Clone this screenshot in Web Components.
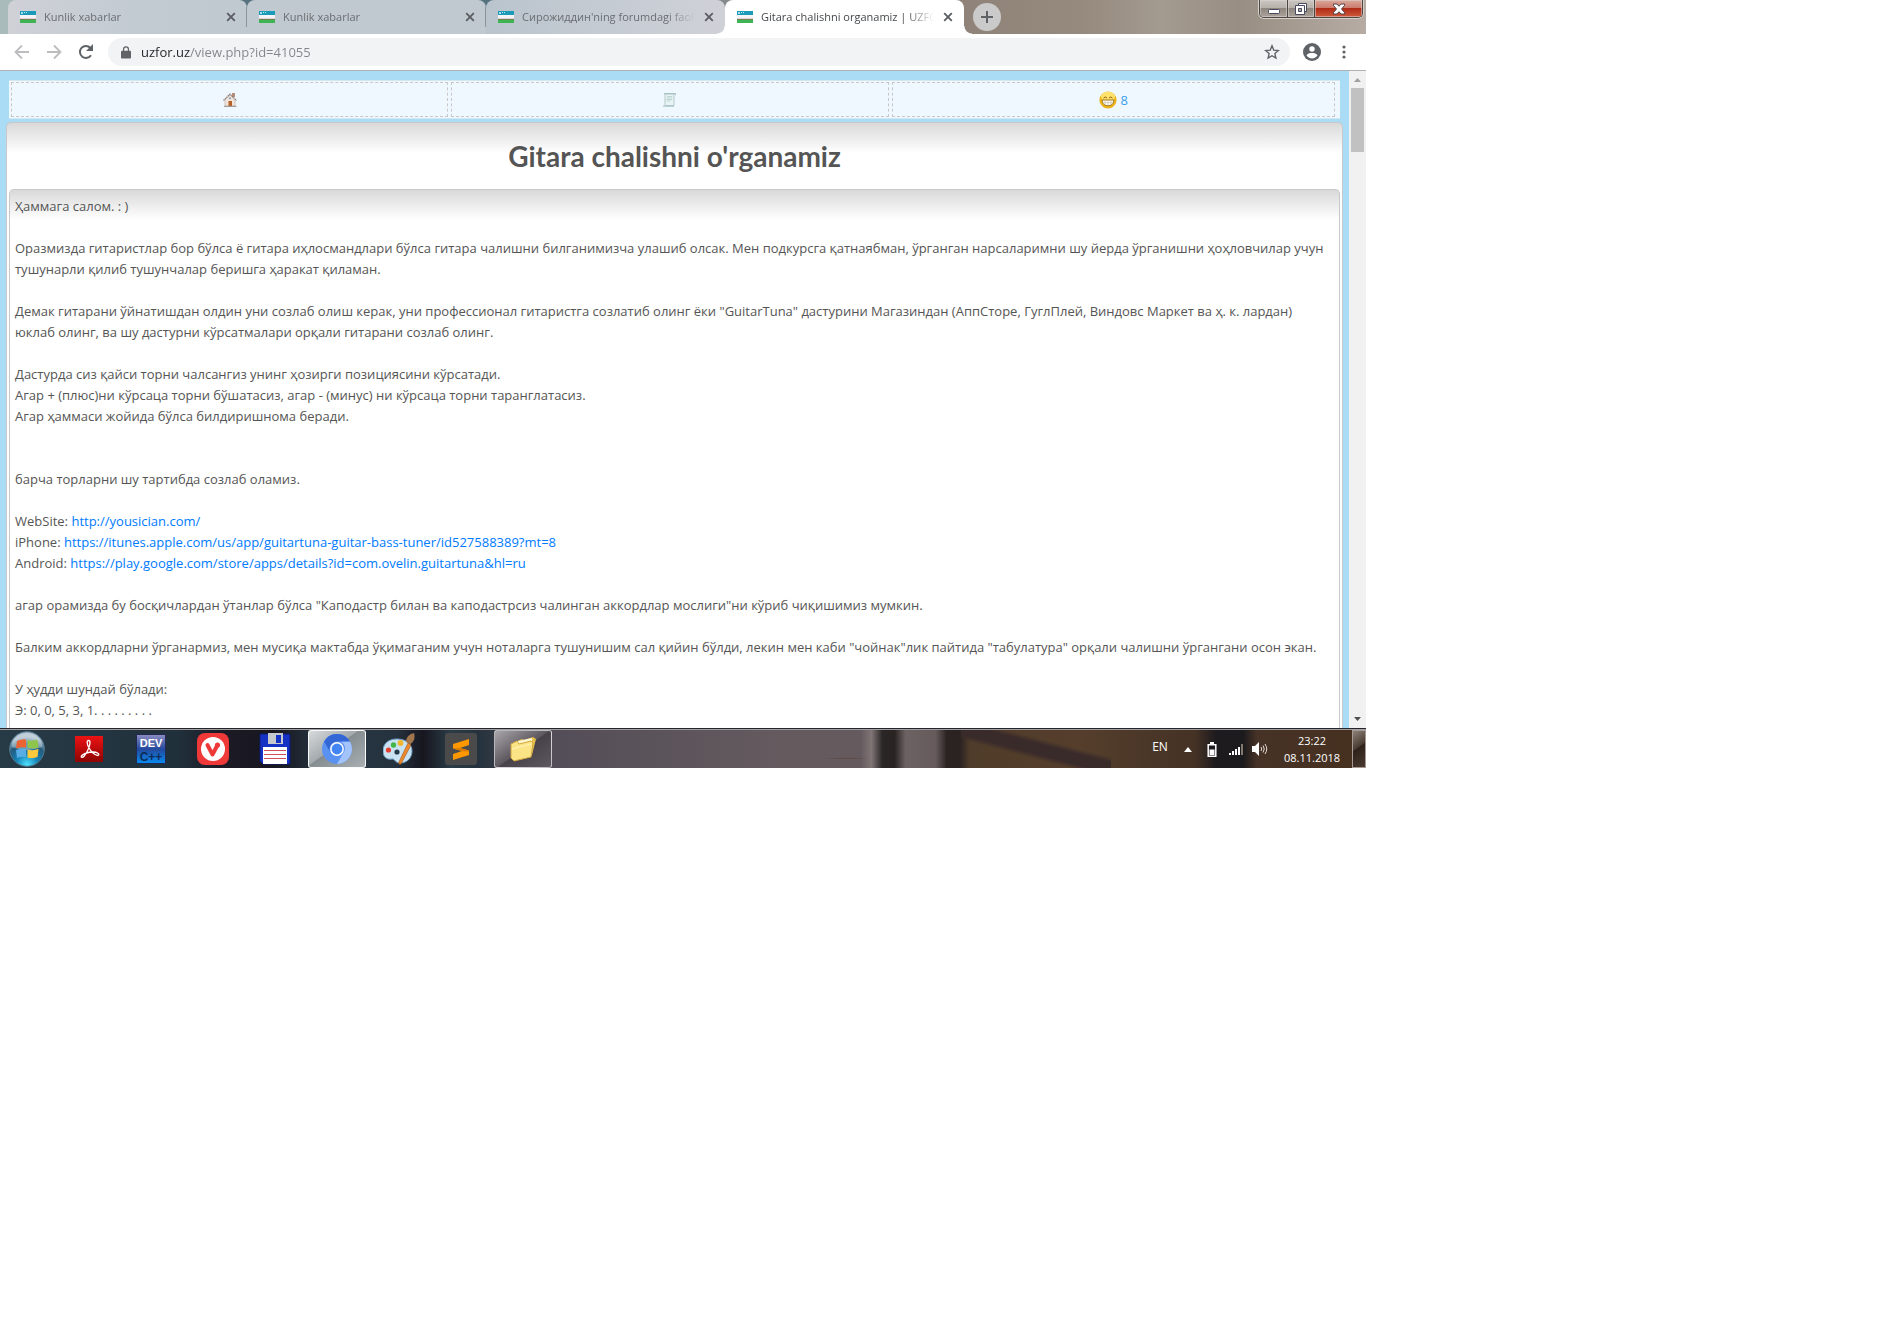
<!DOCTYPE html>
<html lang="uz">
<head>
<meta charset="utf-8">
<title>Gitara chalishni organamiz | UZFOR</title>
<style>
  body { margin: 0; background: #fff; font-family: "Open Sans", "Noto Sans", sans-serif; }
</style>
</head>
<body>
<desktop-screen>
  <tab-strip slot="window">
    <browser-tab>Kunlik xabarlar</browser-tab>
    <browser-tab>Kunlik xabarlar</browser-tab>
    <browser-tab>Сирожиддин'ning forumdagi faoliyati</browser-tab>
    <browser-tab active>Gitara chalishni organamiz | UZFOR</browser-tab>
  </tab-strip>
  <browser-toolbar slot="window"></browser-toolbar>
  <page-view slot="window">
    <forum-nav></forum-nav>
    <forum-topic>
      <span slot="title">Gitara chalishni o'rganamiz</span>
      Ҳаммага салом. : )<br><br>
      Оразмизда гитаристлар бор бўлса ё гитара иҳлосмандлари бўлса гитара чалишни билганимизча улашиб олсак. Мен подкурсга қатнаябман, ўрганган нарсаларимни шу йерда ўрганишни ҳоҳловчилар учун<br>
      тушунарли қилиб тушунчалар беришга ҳаракат қиламан.<br><br>
      Демак гитарани ўйнатишдан олдин уни созлаб олиш керак, уни профессионал гитаристга созлатиб олинг ёки "GuitarTuna" дастурини Магазиндан (АппСторе, ГуглПлей, Виндовс Маркет ва ҳ. к. лардан)<br>
      юклаб олинг, ва шу дастурни кўрсатмалари орқали гитарани созлаб олинг.<br><br>
      Дастурда сиз қайси торни чалсангиз унинг ҳозирги позициясини кўрсатади.<br>
      Агар + (плюс)ни кўрсаца торни бўшатасиз, агар - (минус) ни кўрсаца торни таранглатасиз.<br>
      Агар ҳаммаси жойида бўлса билдиришнома беради.<br><br><br>
      барча торларни шу тартибда созлаб оламиз.<br><br>
      WebSite: <topic-link>http://yousician.com/</topic-link><br>
      iPhone: <topic-link>https://itunes.apple.com/us/app/guitartuna-guitar-bass-tuner/id527588389?mt=8</topic-link><br>
      Android: <topic-link>https://play.google.com/store/apps/details?id=com.ovelin.guitartuna&amp;hl=ru</topic-link><br><br>
      агар орамизда бу босқичлардан ўтанлар бўлса "Каподастр билан ва каподастрсиз чалинган аккордлар мослиги"ни кўриб чиқишимиз мумкин.<br><br>
      Балким аккордларни ўрганармиз, мен мусиқа мактабда ўқимаганим учун ноталарга тушунишим сал қийин бўлди, лекин мен каби "чойнак"лик пайтида "табулатура" орқали чалишни ўргангани осон экан.<br><br>
      У ҳудди шундай бўлади:<br>
      Э: 0, 0, 5, 3, 1. . . . . . . . .
    </forum-topic>
  </page-view>
  <task-bar slot="taskbar"></task-bar>
</desktop-screen>

<script>
const define = (name, html, setup) => {
  const template = document.createElement('template');
  template.innerHTML = html;
  customElements.define(name, class extends HTMLElement {
    constructor() {
      super();
      this.attachShadow({ mode: 'open' }).append(template.content.cloneNode(true));
    }
    connectedCallback() { if (setup) setup(this, this.shadowRoot); }
  });
};
const reset = `:host,*{box-sizing:border-box} button{font:inherit;color:inherit;border:0;padding:0;margin:0;background:none;display:flex;align-items:center;justify-content:center} svg{display:block;flex:none}`;

define('desktop-screen', `<style>
  :host{display:block;max-width:1366px}
</style><slot name="window"></slot><slot name="taskbar"></slot>`);

define('tab-strip', `<style>${reset}
  :host{display:flex;height:34px;padding-left:8px;align-items:flex-start;
    background:linear-gradient(90deg,#a9bcbb 0,#a9bcbb 8px,#56727f 240px,#56727f 490px,#85898b 720px,#8f8379 960px,#96897d 1080px,#a39a90 1160px,#998e83 1240px,#b6aca4 100%)}
  .tabs{display:flex;flex:0 1 956px;min-width:0}
  .new{width:28px;height:28px;margin:3px 0 0 9px;border-radius:50%;background:#cbcacb;flex:none}
  .controls{display:flex;margin-left:auto;margin-right:3px;height:18px;border:1px solid #4c4644;border-top:0;border-radius:0 0 5px 5px;overflow:hidden;box-shadow:0 0 0 1px #d6d0cb;flex:none}
  .controls button{height:17px;width:27px;border-right:1px solid #4c4644;background:linear-gradient(#cbc6c2,#b8b1ab 45%,#8e867f 50%,#aba39b);box-shadow:inset 0 0 0 1px #ddd8d488}
  .controls button:first-child{width:28px}
  .controls button:last-child{width:47px;border:0;background:linear-gradient(#d9a99c,#cc7c6c 45%,#b02b16 50%,#cf5a3c)}
</style>
<div class="tabs"><slot></slot></div>
<button class="new" aria-label="New tab"><svg width="12" height="12" viewBox="0 0 12 12"><path d="M6 0v12M0 6h12" stroke="#5f6368" stroke-width="2"/></svg></button>
<div class="controls">
  <button aria-label="Minimize"><svg width="14" height="12" viewBox="0 0 14 12"><rect x="1.500" y="6.500" width="11" height="4" rx="1" fill="#fff" stroke="#474a5c"/></svg></button>
  <button aria-label="Restore"><svg width="14" height="14" viewBox="0 0 14 14"><path d="M4.500 1.500h8v8h-8z" fill="#fff" stroke="#474a5c"/><path d="M1.500 3.500h9v9h-9z" fill="#fff" stroke="#474a5c"/><path d="M4.500 6.500h3v3h-3z" fill="#aaa" stroke="#474a5c"/></svg></button>
  <button aria-label="Close"><svg width="14" height="12" viewBox="0 0 14 12"><path d="M1.500 1h3.500l2 2.300L9 1h3.500v1.500L9.500 6l3 3.500V11H9L7 8.700 5 11H1.500V9.500L4.500 6l-3-3.500z" fill="#fff" stroke="#50434c"/></svg></button>
</div>`);

define('browser-tab', `<style>${reset}
  :host{position:relative;display:flex;align-items:center;gap:8px;flex:1 1 0;min-width:0;height:34px;padding:0 10px 0 12px;border-radius:8px 8px 0 0;
    background:linear-gradient(90deg,#cfd1d7,#c3cbd2 50%,#c0c8d0);color:#6b6d71}
  :host(:nth-child(2)){background:#c0c9d0}
  :host(:nth-child(3)){background:linear-gradient(90deg,#b9c4cd,#c5cbd3 50%,#cfd1d7)}
  :host([active]){background:#fff;color:#45484c}
  :host(:nth-child(-n+2))::after{content:"";position:absolute;right:0;top:7px;width:1px;height:20px;background:#8b9499}
  :host([active])::before,:host([active])::after{content:"";position:absolute;bottom:0;width:8px;height:8px}
  :host([active])::before{left:-8px;background:radial-gradient(circle at 0 0,#0000 7px,#fff 8px)}
  :host([active])::after{right:-8px;background:radial-gradient(circle at 100% 0,#0000 7px,#fff 8px)}
  .title{flex:1;min-width:0;overflow:hidden;white-space:nowrap;font-size:11px;line-height:20px;text-align:left;display:block;
    -webkit-mask:linear-gradient(90deg,#000 calc(100% - 28px),#0000);mask:linear-gradient(90deg,#000 calc(100% - 28px),#0000)}
  .close{width:12px;height:12px;flex:none;color:#5a5d61}
</style>
<svg width="16" height="12" viewBox="0 0 16 12"><path fill="#1b9ab9" d="M0 0h16v4H0z"/><path fill="#f4f4f6" d="M0 4h16v4H0z"/><path fill="#3eb552" d="M0 8h16v4H0z"/><path stroke="#a0505a" stroke-width=".7" d="M0 8.200h16"/><circle cx="2" cy="2" r="1.100" fill="#c5eef6"/><path stroke="#c5eef6" d="M4 1.500h4" stroke-dasharray="1 1"/></svg>
<button class="title" role="tab"><slot></slot></button>
<button class="close" aria-label="Close tab"><svg width="10" height="10" viewBox="0 0 10 10"><path d="M1.200 1.200l7.600 7.600M8.800 1.200L1.200 8.800" stroke="currentColor" stroke-width="1.800"/></svg></button>`);

define('browser-toolbar', `<style>${reset}
  :host{display:flex;align-items:center;height:37px;padding:0 14px 0 12px;background:#fff;border-bottom:1px solid #b3b0b3;color:#5f6368}
  .nav{display:flex;gap:12px;margin-right:12px}
  .nav button{width:20px;height:28px}
  .off{color:#bdbdbf}
  .box{display:flex;flex:1;align-items:center;height:28px;border-radius:14px;background:#f1f3f4;padding:0 10px 0 13px;gap:10px}
  input{flex:1;min-width:0;border:0;outline:0;padding:0;height:24px;font:13px/24px "Open Sans",sans-serif;color:#202124;
    -webkit-text-fill-color:transparent;background:linear-gradient(90deg,#202124 49px,#80868b 49px);-webkit-background-clip:text;background-clip:text}
  .end{display:flex;gap:14px;margin-left:12px}
  .end button{width:16px}
  .end button:first-child{width:20px}
</style>
<div class="nav">
  <button class="off" aria-label="Back"><svg width="16" height="16" viewBox="0 0 16 16"><path d="M15 8H2M8 1.500L1.500 8 8 14.500" fill="none" stroke="currentColor" stroke-width="1.800"/></svg></button>
  <button class="off" aria-label="Forward"><svg width="16" height="16" viewBox="0 0 16 16"><path d="M1 8h13M8 1.500L14.500 8 8 14.500" fill="none" stroke="currentColor" stroke-width="1.800"/></svg></button>
  <button aria-label="Reload"><svg width="16" height="16" viewBox="0 0 16 16"><path d="M13 11.200A6 6 0 1 1 12.300 3.800" fill="none" stroke="currentColor" stroke-width="2"/><path d="M15 0v7H8z" fill="currentColor"/></svg></button>
</div>
<div class="box">
  <svg width="10" height="13" viewBox="0 0 11 14"><path d="M1 5h9a1 1 0 0 1 1 1v6.500a1 1 0 0 1-1 1H1a1 1 0 0 1-1-1V6a1 1 0 0 1 1-1z" fill="currentColor"/><path d="M2.800 6V3.500a2.700 2.700 0 0 1 5.400 0V6" fill="none" stroke="currentColor" stroke-width="1.400"/></svg>
  <input aria-label="Address" value="uzfor.uz/view.php?id=41055">
  <button aria-label="Bookmark"><svg width="16" height="16" viewBox="0 0 16 16"><path d="M8 1.800l1.700 4.300 4.700.4-3.500 3.100 1 4.500L8 11.700l-3.900 2.400 1-4.500L1.600 6.500l4.700-.4z" fill="none" stroke="currentColor" stroke-width="1.400"/></svg></button>
</div>
<div class="end">
  <button aria-label="Profile"><svg width="18" height="18" viewBox="0 0 18 18"><circle cx="9" cy="9" r="9" fill="currentColor"/><circle cx="9" cy="6" r="2.700" fill="#fff"/><path d="M3.500 12.600c1-2 3-2.600 5.500-2.600s4.500.6 5.500 2.600C13 14.600 11 15.500 9 15.500s-4-.9-5.500-2.900z" fill="#fff"/></svg></button>
  <button aria-label="Menu"><svg width="4" height="14" viewBox="0 0 4 14" fill="currentColor"><circle cx="2" cy="2" r="1.600"/><circle cx="2" cy="7" r="1.600"/><circle cx="2" cy="12" r="1.600"/></svg></button>
</div>`);

define('page-view', `<style>${reset}
  :host{display:flex;background:#aadcf6}
  main{flex:1;min-width:0;padding:9px 6px 0 6px}
  .scroll{width:17px;background:#f1f1f1;display:flex;flex-direction:column;align-items:center;padding:7px 0}
  .thumb{width:13px;height:64px;background:#c1c1c1;margin-top:6px}
  .down{margin-top:auto}
</style><main><slot></slot></main>
<div class="scroll"><svg width="7" height="4" viewBox="0 0 7 4"><path d="M0 4l3.500-4L7 4z" fill="#a0a0a0"/></svg><div class="thumb"></div><svg class="down" width="7" height="4" viewBox="0 0 7 4"><path d="M0 0l3.500 4L7 0z" fill="#505050"/></svg></div>`);

define('forum-nav', `<style>${reset}
  :host{display:flex;gap:3px;margin:0 3px 3px;padding:1px 5px 1px 2px;height:39px;background:#eff7ff;border:1px solid #d4e6ee;border-width:1px 0}
  a{flex:1;display:flex;gap:4px;align-items:center;justify-content:center;height:35px;border:1px dashed #c8c8c8;text-decoration:none;color:#3aa0e8;font-size:13px}
  a:last-child{padding:0 3px}
</style>
<a href="#home" aria-label="Home"><svg width="14" height="14" viewBox="0 0 14 14"><path d="M9 0h3v4H9z" fill="#b98f78"/><path d="M2 7l5-5 5 5v6H2z" fill="#f1e4db" stroke="#b9aaa0" stroke-width=".6"/><path d="M.500 7.500L7 1l6.500 6.500" fill="none" stroke="#857a78" stroke-width="1.100" stroke-dasharray="1.500 .5"/><path d="M5.500 8h3.500v5H5.500z" fill="#b5622a"/><circle cx="7" cy="5.300" r="1" fill="#8d93a5"/><path d="M1 13.400h12.500" stroke="#9c938c"/></svg></a>
<a href="#rules" aria-label="Rules"><svg width="13" height="14" viewBox="0 0 13 14"><path d="M2 1h9v11.500H2z" fill="#e9f4f4" stroke="#b5c9cb"/><path d="M1 .6h11.500v1.500M0 13.200h11" fill="none" stroke="#a3bfc2"/><path d="M4 3.500h5M3.500 5h6M3.500 6.500h5.500M3.500 8h4" stroke="#c0d5d5" stroke-width="1.200"/></svg></a>
<a href="#smiles"><svg width="18" height="18" viewBox="0 0 18 18"><circle cx="9" cy="9" r="8.600" fill="#ecb51b"/><ellipse cx="9" cy="5.500" rx="7" ry="4.800" fill="#ffe26b"/><path d="M4.500 7q1.500-2 3.500 0M10 7q1.500-2 3.500 0" fill="none" stroke="#8c6210"/><path d="M3.200 9h11.600c0 4-2.800 5.700-5.800 5.700S3.200 13 3.200 9z" fill="#fff" stroke="#9d7219"/><path d="M6 9.500v4M9 9.500v5M12 9.500v4M4 11.700h10" stroke="#c9bfa0" stroke-width=".7"/></svg>8</a>`);

define('forum-topic', `<style>${reset}
  :host{display:block;background:linear-gradient(#d9d9d9,#fff 30px);border:1px solid #c8c8c8;border-bottom:0;border-radius:5px 5px 0 0;padding:0 2px;color:#555}
  h1{margin:0;padding:16px 0;text-align:center;font:700 28px/34px "Lato","Open Sans",sans-serif}
  article{border:1px solid #c8c8c8;border-bottom:0;border-radius:5px 5px 0 0;background:linear-gradient(#d9d9d9,#fff 30px);padding:6px 5px 7px;font-size:13px;line-height:21px;white-space:nowrap}
</style><h1><slot name="title"></slot></h1><article><slot></slot></article>`);

define('topic-link', `<style>:host{display:inline}a{color:#007bff;text-decoration:none}</style><a><slot></slot></a>`,
  (el, root) => { root.querySelector('a').href = el.textContent; });

define('task-item', `<style>${reset}
  :host{display:flex;width:62px;height:38px;padding:0 2px}
  button{width:58px;height:38px;border-radius:3px}
  :host([open]) button{border:1px solid #ffffff99;background:linear-gradient(145deg,#a9a6ab,#5c575e 50%,#47424a 51%,#5d5860)}
  :host([current]) button{border-color:#fffffff0;background:linear-gradient(145deg,#d8dadb,#a3aaad 45%,#858d91 46%,#a9afb2)}
</style><button><slot></slot></button>`, (el, root) => root.querySelector('button').setAttribute('aria-label', el.getAttribute('label')));

define('task-bar', `<style>${reset}
  :host{display:flex;height:40px;border-top:1px solid #25262b;box-shadow:inset 0 1px #a29fa2;padding-top:1px;color:#fff;
    background:linear-gradient(to top right,#0000 36%,#3a2b2b 43%,#3a2b2b 57%,#0000 64%) 79% 0/150px 100% no-repeat,
    radial-gradient(ellipse at 62% 75%,#5a3227aa 0,#0000 2%),
    linear-gradient(90deg,#0000 63%,#807475 63.800%,#2a2625 64.600%,#292422 65.500%,#6d6263 66.300%,#665a5b 68.500%,#2b2322 69.300%,#2b2322 70.300%,#503c2a 71%,#553e2b 79%,#4b3728 84%,#453225 87.500%,#1e1b1e 89%,#1b1a1d 91%,#463226 92%,#46301f 100%),
    linear-gradient(90deg,#273b47 0,#20303b 13%,#1d1c26 16%,#17161f 20%,#273845 24%,#25323e 29%,#17161f 31%,#2a3c47 33%,#25323d 35%,#534d58 40%,#5d555b 50%,#655b5f 58%,#625459 100%)}
  .orb{width:54px;height:38px;margin-right:4px}
  .tray{display:flex;align-items:center;margin-left:auto}
  .lang{font-size:12px;line-height:16px;margin:0 6px 4px 0;width:20px;text-align:center}
  .icons{display:flex;align-items:center;margin-right:7px}
  .icons div{width:24px;display:flex;justify-content:center}
  time{display:block;font-size:11px;line-height:17px;text-align:center;width:66px;margin-right:7px}
  .show{width:14px;height:38px;border:1px solid #a59b94;background:linear-gradient(145deg,#8b8078,#493b31 45%,#2d221c 46%,#4a3a2e)}
</style>
<button class="orb" aria-label="Start"><svg width="36" height="36" viewBox="0 0 36 36"><defs><radialGradient id="o" cx=".5" cy=".95" r=".8"><stop offset="0" stop-color="#4fe3ff"/><stop offset=".4" stop-color="#1581b6"/><stop offset=".75" stop-color="#245a7c"/><stop offset="1" stop-color="#9fb5c4"/></radialGradient></defs><circle cx="18" cy="18" r="17.300" fill="url(#o)" stroke="#537b91"/><path d="M3 16a15 14 0 0 1 30 0q-15 6-30 0z" fill="#fff" opacity=".35"/><path d="M8 10q5-2.500 9-1.500v8q-5-.8-10 1z" fill="#ec6431"/><path d="M18.500 9q5 1.500 10-.5l1 8q-5 2-11 0z" fill="#8fc54b"/><path d="M7 19q5-2 10-1v8q-4-1-9 1z" fill="#58aee4"/><path d="M18.500 18.500q6 1.500 11-.5l-1 8q-5 2-10 .5z" fill="#fdc93c"/></svg></button>
<task-item label="Adobe Reader"><svg width="28" height="26" viewBox="0 0 28 26"><defs><linearGradient id="r" x1="0" y1="0" x2="0" y2="1"><stop stop-color="#ed1313"/><stop offset="1" stop-color="#8d0303"/></linearGradient></defs><path fill="url(#r)" d="M0 0h28v26H0z"/><path d="M13.500 4.500c-2 0-1.500 3 0 6.500 2 4 6 8.500 9.500 8.500 2.500-1.500-1-3.500-5-3.500s-9 1.500-11.500 3.700c-1 2 1 2.300 3 0 2-2.500 5.500-9.200 5.500-13 0-1.500-.5-2.200-1.500-2.200z" fill="none" stroke="#fff" stroke-width="1.300"/></svg></task-item>
<task-item label="Dev-C++"><svg width="30" height="30" viewBox="0 0 30 30"><defs><linearGradient id="d" x1="0" y1="0" x2="0" y2="1"><stop stop-color="#8f8ec4"/><stop offset=".5" stop-color="#24499c"/><stop offset="1" stop-color="#078bf0"/></linearGradient></defs><path fill="url(#d)" stroke="#202a50" d="M.5.5h29v29H.5z"/><text x="15" y="13" text-anchor="middle" font-family="Liberation Sans" font-weight="700" font-size="11" fill="#fff">DEV</text><text x="15" y="27" text-anchor="middle" font-family="Liberation Sans" font-weight="700" font-size="12" fill="#0c2c59">C++</text></svg></task-item>
<task-item label="Vivaldi"><svg width="32" height="32" viewBox="0 0 32 32"><rect width="32" height="32" rx="8" fill="#ef3939"/><circle cx="16" cy="16" r="12" fill="#fff"/><path d="M10.500 12l5 9.500 4.500-8.500" fill="none" stroke="#ef3939" stroke-width="4" stroke-linecap="round" stroke-linejoin="round"/><circle cx="20.500" cy="12" r="2.600" fill="#ef3939"/></svg></task-item>
<task-item label="Total Commander"><svg width="32" height="32" viewBox="0 0 32 32"><path d="M1 1h29l1 1v29H4l-3-3z" fill="#1532c5" stroke="#0b1a77"/><path d="M9 0h15v11H9z" fill="#c5c8cc"/><path d="M17 2h5v8h-5z" fill="#1532c5"/><path d="M4 14h24v17H4z" fill="#fff"/><path d="M5 17.500h22M5 21.500h22M5 25.500h22" stroke="#d0505a" stroke-width="1.200"/></svg></task-item>
<task-item label="Chromium" open current><svg width="30" height="30" viewBox="0 0 30 30"><circle cx="15" cy="15" r="15" fill="#5a92f2"/><path d="M2 7.500A15 15 0 0 1 28 7.500H15a7.500 7.500 0 0 0-6.500 11z" fill="#3467d6"/><path d="M28.100 7.700A15 15 0 0 1 15 30l6.500-11.200A7.500 7.500 0 0 0 19 7.700z" fill="#a3c3fb"/><circle cx="15" cy="15" r="6.900" fill="#fff"/><circle cx="15" cy="15" r="5.400" fill="#4285f4"/></svg></task-item>
<task-item label="Paint"><svg width="32" height="32" viewBox="0 0 32 32"><path d="M14 6C5 6 0 11 0 18c0 6 4 9 9 8 3-.5 3 4 8 4 7 0 12-5 12-12S23 6 14 6z" fill="#c9e3f3" stroke="#6f9fc4"/><circle cx="14" cy="19" r="2.600" fill="#263c4b"/><circle cx="5.500" cy="17" r="2.600" fill="#e5402f"/><circle cx="10.500" cy="12" r="2.700" fill="#42b649"/><circle cx="17.500" cy="10" r="2.900" fill="#f3b52f"/><path d="M25 10l3 2-10 19q-3 1-2-2z" fill="#ee8a2d" stroke="#9d5316" stroke-width=".6"/><path d="M23 9q0-7 8-9 2 7-3.500 11z" fill="#a4764c"/></svg></task-item>
<task-item label="Sublime Text"><svg width="32" height="32" viewBox="0 0 32 32"><rect width="32" height="32" rx="3" fill="#4a4a4b"/><path d="M8 11l16-5v6l-9 3 9 2.500V22L8 27v-6l9-3-9-2.500z" fill="#ff9800"/><path d="M8 15.500l9 2.700 7 .3v-1L15 15z" fill="#d97b00"/></svg></task-item>
<task-item label="Explorer" open><svg width="26" height="26" viewBox="0 0 26 26"><path d="M5 6l7-3 2 1 9-3 3 2-4 16-15 3z" fill="#e5bd4b"/><path d="M8 5l14-3v15H8z" fill="#fff7cf"/><path d="M1 8l6-3 2 3 12-3 2 2-2 14-17 4-3-3z" fill="#fbe486" stroke="#d1a740"/><path d="M2 13l19-5" stroke="#fff5b9"/></svg></task-item>
<div class="tray">
  <div class="lang">EN</div>
  <div class="icons">
    <div><svg width="8" height="5" viewBox="0 0 8 5"><path d="M0 5l4-5 4 5z" fill="#fff"/></svg></div>
    <div><svg width="10" height="15" viewBox="5 0 10 15"><path d="M6.200 2.700h7.600v11.500H6.200z" fill="#1e1b1e" stroke="#fff" stroke-width="1.500"/><path d="M8 0h4v2H8zM7.500 7.500h5V13h-5z" fill="#fff"/></svg></div>
    <div><svg width="15" height="12" viewBox="0 0 15 12" fill="#fff"><path d="M0 10h2v2H0zM3 8h2v4H3zM6 6h2v6H6zM9 4h2v8H9z"/><path d="M12 1h2v11h-2z" fill="#82796f"/></svg></div>
    <div><svg width="16" height="14" viewBox="0 0 16 14"><path d="M0 4h3l4-4v14l-4-4H0z" fill="#fff"/><path d="M9 5q1.500 2 0 4M11 3.500q2.500 3.500 0 7M13 2q3.500 5 0 10" fill="none" stroke="#e2dcd6"/></svg></div>
  </div>
  <time>23:22<br>08.11.2018</time>
  <button class="show" aria-label="Show desktop"></button>
</div>`);
</script>
</body>
</html>
